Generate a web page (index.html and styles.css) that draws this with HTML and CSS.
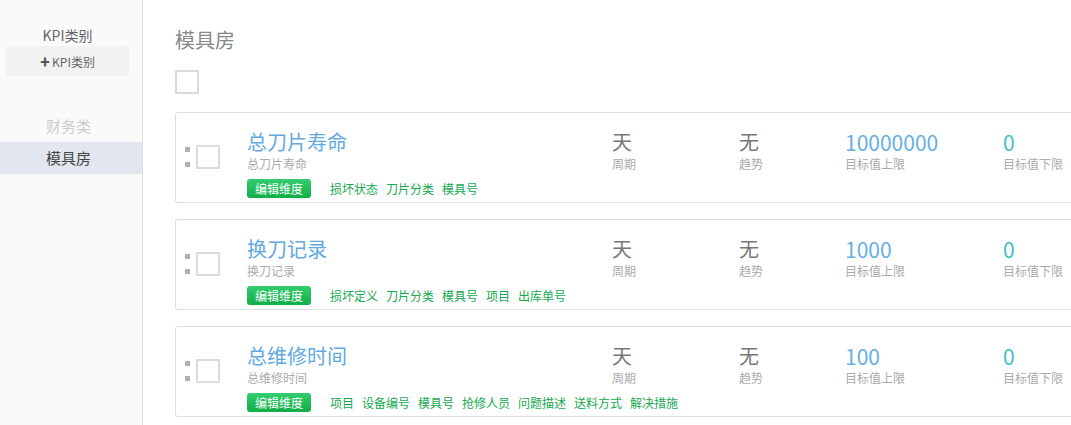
FILE: index.html
```html
<!DOCTYPE html>
<html lang="zh">
<head>
<meta charset="utf-8">
<link rel="stylesheet" href="styles.css">
</head>
<body>
<div class="app">
  <aside class="sidebar">
    <div class="side-title">KPI类别</div>
    <div class="side-add"><span class="plus">✚</span>KPI类别</div>
    <ul class="side-list">
      <li class="side-item">财务类</li>
      <li class="side-item active">模具房</li>
    </ul>
  </aside>
  <main class="main">
    <h1 class="page-title">模具房</h1>
    <div class="check all"></div>
    <div class="cards">
      <div class="card">
        <div class="handle"><i></i><i></i></div>
        <div class="check"></div>
        <div class="info">
          <div class="name">总刀片寿命</div>
          <div class="sub">总刀片寿命</div>
          <div class="dims"><span class="btn">编辑维度</span><span class="tag">损坏状态</span><span class="tag">刀片分类</span><span class="tag">模具号</span></div>
        </div>
        <div class="col c1"><div class="val plain">天</div><div class="lbl">周期</div></div>
        <div class="col c2"><div class="val plain">无</div><div class="lbl">趋势</div></div>
        <div class="col c3"><div class="val blue">10000000</div><div class="lbl">目标值上限</div></div>
        <div class="col c4"><div class="val teal">0</div><div class="lbl">目标值下限</div></div>
      </div>
      <div class="card">
        <div class="handle"><i></i><i></i></div>
        <div class="check"></div>
        <div class="info">
          <div class="name">换刀记录</div>
          <div class="sub">换刀记录</div>
          <div class="dims"><span class="btn">编辑维度</span><span class="tag">损坏定义</span><span class="tag">刀片分类</span><span class="tag">模具号</span><span class="tag">项目</span><span class="tag">出库单号</span></div>
        </div>
        <div class="col c1"><div class="val plain">天</div><div class="lbl">周期</div></div>
        <div class="col c2"><div class="val plain">无</div><div class="lbl">趋势</div></div>
        <div class="col c3"><div class="val blue">1000</div><div class="lbl">目标值上限</div></div>
        <div class="col c4"><div class="val teal">0</div><div class="lbl">目标值下限</div></div>
      </div>
      <div class="card">
        <div class="handle"><i></i><i></i></div>
        <div class="check"></div>
        <div class="info">
          <div class="name">总维修时间</div>
          <div class="sub">总维修时间</div>
          <div class="dims"><span class="btn">编辑维度</span><span class="tag">项目</span><span class="tag">设备编号</span><span class="tag">模具号</span><span class="tag">抢修人员</span><span class="tag">问题描述</span><span class="tag">送料方式</span><span class="tag">解决措施</span></div>
        </div>
        <div class="col c1"><div class="val plain">天</div><div class="lbl">周期</div></div>
        <div class="col c2"><div class="val plain">无</div><div class="lbl">趋势</div></div>
        <div class="col c3"><div class="val blue">100</div><div class="lbl">目标值上限</div></div>
        <div class="col c4"><div class="val teal">0</div><div class="lbl">目标值下限</div></div>
      </div>
    </div>
  </main>
</div>
</body>
</html>
```
FILE: styles.css
```css
* { box-sizing: border-box; }
html, body { margin: 0; padding: 0; }
body {
  font-family: "Noto Sans CJK SC", "Noto Sans", sans-serif;
  background: #fff;
  width: 1071px;
  height: 425px;
  overflow: hidden;
}
.app { display: flex; height: 425px; }
.sidebar {
  width: 143px;
  flex: none;
  background: #fafafa;
  border-right: 1px solid #dcdcdc;
  padding-top: 25px;
}
.side-title {
  text-align: center;
  font-size: 14px;
  line-height: 20px;
  color: #666;
  padding-right: 7px;
}
.side-add {
  margin: 1px 0 0 6px;
  width: 123px;
  height: 30px;
  background: #f2f2f2;
  border-radius: 3px;
  display: flex;
  align-items: center;
  justify-content: center;
  font-size: 12px;
  color: #666;
}
.plus { font-size: 10px; color: #555; margin-right: 2px; }
.side-list { list-style: none; margin: 34px 0 0; padding: 0; }
.side-item {
  height: 32px;
  line-height: 32px;
  text-align: center;
  font-size: 15px;
  color: #ccc;
  padding-right: 5px;
}
.side-item.active { background: #e2e6ee; color: #444; }
.main {
  flex: 1;
  min-width: 0;
  padding: 26px 0 0 32px;
  overflow: hidden;
}
.page-title {
  margin: 0;
  font-size: 20px;
  line-height: 28px;
  font-weight: normal;
  color: #888;
}
.check {
  width: 24px;
  height: 24px;
  border: 2px solid #dedbd7;
  background: #fff;
  flex: none;
}
.check.all { margin-top: 16px; }
.cards {
  margin-top: 18px;
  display: flex;
  flex-direction: column;
  gap: 16px;
  width: 1000px;
}
.card {
  height: 91px;
  border: 1px solid #ddd;
  border-radius: 3px;
  display: flex;
  align-items: center;
  padding-left: 9px;
}
.handle {
  width: 6px;
  display: flex;
  flex-direction: column;
  gap: 10px;
  margin-right: 5px;
  margin-top: -2px;
  flex: none;
}
.handle i { display: block; width: 5px; height: 5px; background: #aeb0b4; }
.card .check { margin-top: -2px; }
.info {
  width: 392px;
  padding-left: 27px;
  align-self: flex-start;
  padding-top: 17px;
  flex: none;
  white-space: nowrap;
}
.name { font-size: 20px; line-height: 24px; color: #62a9e2; }
.sub { font-size: 12px; line-height: 16px; color: #aaa; margin-top: 2px; }
.dims { display: flex; align-items: center; margin-top: 7px; width: max-content; }
.btn {
  flex: none;
  height: 19px;
  line-height: 19px;
  padding: 0 8px;
  border-radius: 3px;
  background: linear-gradient(#34cd6f, #10ad48);
  color: #fff;
  font-size: 12px;
  margin-right: 11px;
}
.tag { flex: none; font-size: 12px; color: #16a950; margin-left: 8px; line-height: 19px; }
.col { align-self: flex-start; padding-top: 17px; flex: none; }
.c1 { width: 127px; }
.c2 { width: 106px; }
.c3 { width: 158px; }
.c4 { width: 100px; }
.val { font-size: 20px; line-height: 24px; }
.val.plain { color: #777; }
.val.blue { color: #66aee6; font-size: 21px; }
.val.teal { color: #3fc0c2; font-size: 21px; }
.lbl { font-size: 12px; line-height: 16px; color: #aaa; margin-top: 2px; }
```
